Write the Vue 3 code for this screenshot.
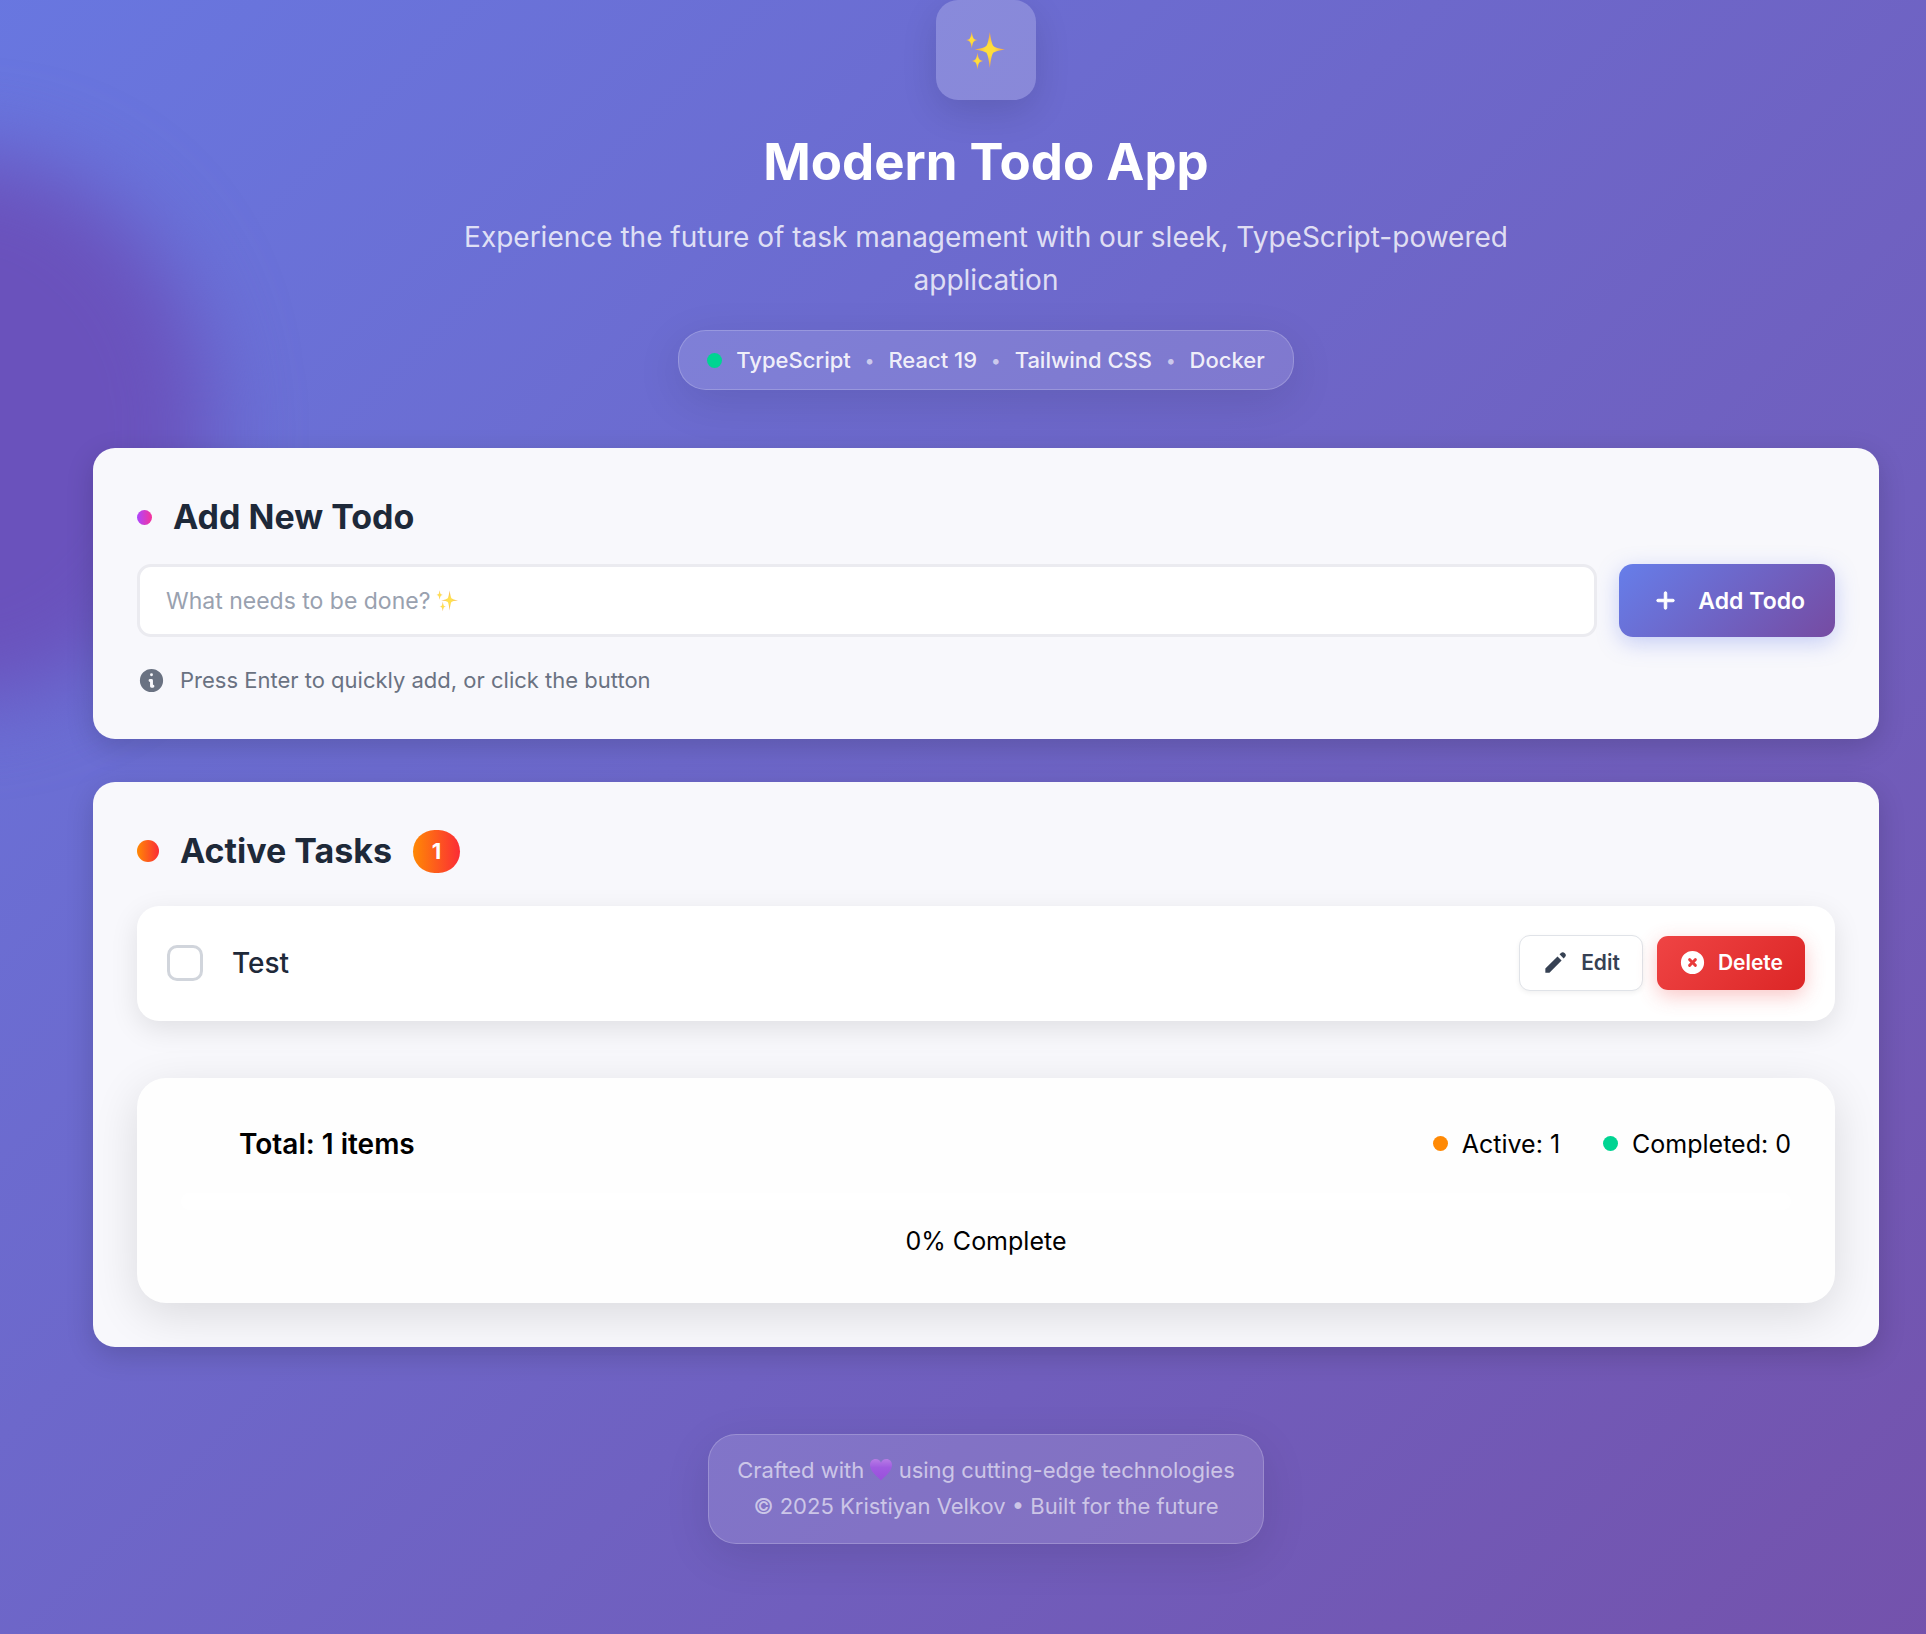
<script setup>
import { ref, computed } from 'vue'

const technologies = ['TypeScript', 'React 19', 'Tailwind CSS', 'Docker']
const draft = ref('')
const todos = ref([{ id: 1, text: 'Test', done: false }])

const active = computed(() => todos.value.filter((t) => !t.done))
const completed = computed(() => todos.value.length - active.value.length)
const percent = computed(() =>
  todos.value.length ? Math.round((completed.value / todos.value.length) * 100) : 0
)

function addTodo() {
  const text = draft.value.trim()
  if (!text) return
  todos.value.push({ id: Date.now(), text, done: false })
  draft.value = ''
}

function removeTodo(id) {
  todos.value = todos.value.filter((t) => t.id !== id)
}
</script>

<template>
  <div class="page">
    <div class="glow" aria-hidden="true"></div>

    <header class="hero">
      <div class="logo">
        <svg class="logo-sparkle" viewBox="0 0 40 40" aria-hidden="true">
          <defs>
            <radialGradient id="spark">
              <stop offset="0.3" stop-color="#ffdd3c" />
              <stop offset="1" stop-color="#f2a04a" />
            </radialGradient>
          </defs>
          <path fill="url(#spark)" d="M24 1Q25.500 12 27.500 15.500Q30 18 40 19.500Q30 21 27.500 23Q25.500 26 24 39Q22.500 26 20.500 23Q18 21 8 19.500Q18 18 20.500 15.500Q22.500 12 24 1Z" />
          <path fill="url(#spark)" d="M5 0.500Q5.700 6 7 7.800Q8 9 11 9.500Q8 10 7 11.200Q5.700 13 5 18.500Q4.300 13 3 11.200Q2 10 -1 9.500Q2 9 3 7.800Q4.300 6 5 0.500Z" />
          <path fill="url(#spark)" d="M11 22.500Q11.700 28 13 29.800Q14 31 17 31.500Q14 32 13 33.200Q11.700 35 11 40.500Q10.300 35 9 33.200Q8 32 5 31.500Q8 31 9 29.800Q10.300 28 11 22.500Z" />
        </svg>
      </div>
      <h1>Modern Todo App</h1>
      <p class="tagline">
        Experience the future of task management with our sleek, TypeScript-powered application
      </p>
      <div class="tech glass">
        <span class="dot green"></span>
        <template v-for="(name, i) in technologies" :key="name">
          <span v-if="i" class="sep">•</span>
          <span>{{ name }}</span>
        </template>
      </div>
    </header>

    <main>
      <section class="card">
        <div class="card-title">
          <span class="dot violet"></span>
          <h2>Add New Todo</h2>
        </div>
        <form class="add-row" @submit.prevent="addTodo">
          <div class="field">
            <input v-model="draft" type="text" aria-label="New todo" placeholder="What needs to be done?" />
            <svg v-if="!draft" class="field-sparkle" viewBox="0 0 40 40" aria-hidden="true">
              <path fill="url(#spark)" d="M24 1Q25.500 12 27.500 15.500Q30 18 40 19.500Q30 21 27.500 23Q25.500 26 24 39Q22.500 26 20.500 23Q18 21 8 19.500Q18 18 20.500 15.500Q22.500 12 24 1Z" />
              <path fill="url(#spark)" d="M5 0.500Q5.700 6 7 7.800Q8 9 11 9.500Q8 10 7 11.200Q5.700 13 5 18.500Q4.300 13 3 11.200Q2 10 -1 9.500Q2 9 3 7.800Q4.300 6 5 0.500Z" />
              <path fill="url(#spark)" d="M11 22.500Q11.700 28 13 29.800Q14 31 17 31.500Q14 32 13 33.200Q11.700 35 11 40.500Q10.300 35 9 33.200Q8 32 5 31.500Q8 31 9 29.800Q10.300 28 11 22.500Z" />
            </svg>
          </div>
          <button class="btn-add" type="submit">
            <svg viewBox="0 0 20 20" aria-hidden="true">
              <path d="M10 3a1 1 0 011 1v5h5a1 1 0 110 2h-5v5a1 1 0 11-2 0v-5H4a1 1 0 110-2h5V4a1 1 0 011-1z" />
            </svg>
            Add Todo
          </button>
        </form>
        <p class="hint">
          <svg viewBox="0 0 20 20" aria-hidden="true">
            <path
              fill-rule="evenodd"
              d="M18 10a8 8 0 11-16 0 8 8 0 0116 0zm-7-4a1 1 0 11-2 0 1 1 0 012 0zM9 9a1 1 0 000 2v3a1 1 0 001 1h1a1 1 0 100-2v-3a1 1 0 00-1-1H9z"
            />
          </svg>
          Press Enter to quickly add, or click the button
        </p>
      </section>

      <section class="card">
        <div class="card-title">
          <span class="dot orange big"></span>
          <h2>Active Tasks</h2>
          <span class="count">{{ active.length }}</span>
        </div>

        <ul class="tasks">
          <li v-for="todo in active" :key="todo.id" class="task">
            <label class="task-label">
              <input v-model="todo.done" type="checkbox" />
              <span>{{ todo.text }}</span>
            </label>
            <button class="btn btn-edit" type="button">
              <svg viewBox="0 0 20 20" aria-hidden="true">
                <path
                  d="M13.586 3.586a2 2 0 112.828 2.828l-.793.793-2.828-2.828.793-.793zM11.379 5.793L3 14.172V17h2.828l8.38-8.379-2.83-2.828z"
                />
              </svg>
              Edit
            </button>
            <button class="btn btn-delete" type="button" @click="removeTodo(todo.id)">
              <svg viewBox="0 0 20 20" aria-hidden="true">
                <path
                  fill-rule="evenodd"
                  d="M10 18a8 8 0 100-16 8 8 0 000 16zM8.707 7.293a1 1 0 00-1.414 1.414L8.586 10l-1.293 1.293a1 1 0 101.414 1.414L10 11.414l1.293 1.293a1 1 0 001.414-1.414L11.414 10l1.293-1.293a1 1 0 00-1.414-1.414L10 8.586 8.707 7.293z"
                />
              </svg>
              Delete
            </button>
          </li>
        </ul>

        <div class="stats">
          <div class="stats-row">
            <strong class="total">Total: {{ todos.length }} items</strong>
            <span class="stat"><span class="dot amber"></span>Active: {{ active.length }}</span>
            <span class="stat"><span class="dot green"></span>Completed: {{ completed }}</span>
          </div>
          <div class="bar"><div class="bar-fill" :style="{ width: percent + '%' }"></div></div>
          <p class="percent">{{ percent }}% Complete</p>
        </div>
      </section>
    </main>

    <footer class="credits glass">
      <p>
        Crafted with
        <svg class="heart" viewBox="0 0 20 20" role="img" aria-label="purple heart">
          <defs>
            <linearGradient id="heart" x2="0" y2="1">
              <stop offset="0" stop-color="#b87be6" />
              <stop offset="0.4" stop-color="#a05be0" />
              <stop offset="1" stop-color="#9a4fdc" />
            </linearGradient>
          </defs>
          <path
            fill="url(#heart)"
            d="M10 19.500C8 17 0 12 0 5.500C0 2 2.500 0 5 0C7.500 0 9.300 1.500 10 3.500C10.700 1.500 12.500 0 15 0C17.500 0 20 2 20 5.500C20 12 12 17 10 19.500Z"
          />
        </svg>
        using cutting-edge technologies
      </p>
      <p>© 2025 Kristiyan Velkov • Built for the future</p>
    </footer>
  </div>
</template>

<style>
body {
  margin: 0;
}
</style>

<style scoped>
* {
  box-sizing: border-box;
}

h1,
h2,
p,
ul {
  margin: 0;
  padding: 0;
}

.page {
  position: relative;
  overflow: hidden;
  min-height: 100vh;
  padding: 0 47px 90px 93px;
  background: linear-gradient(135deg, #667eea -20%, #764ba2 120%);
  font-family: Inter, 'Liberation Sans', sans-serif;
  display: flex;
  flex-direction: column;
}

.glow {
  position: absolute;
  left: -290px;
  top: 154px;
  width: 500px;
  height: 550px;
  border-radius: 50%;
  background: #6a52bc;
  filter: blur(42px);
}

.hero {
  position: relative;
  display: flex;
  flex-direction: column;
  align-items: center;
  color: #fff;
}

.logo {
  width: 100px;
  height: 100px;
  border-radius: 22px;
  background: rgba(255, 255, 255, 0.2);
  box-shadow: 0 12px 36px rgba(0, 0, 0, 0.12);
  display: grid;
  place-items: center;
}

.logo-sparkle {
  width: 38px;
  height: 38px;
  overflow: visible;
}

h1 {
  margin-top: 29px;
  font-size: 51px;
  line-height: 65px;
  font-weight: 700;
}

.tagline {
  max-width: 1104px;
  margin-top: 22px;
  font-size: 28px;
  line-height: 43px;
  text-align: center;
  color: rgba(255, 255, 255, 0.8);
}

.glass {
  border: 1px solid rgba(255, 255, 255, 0.2);
  border-radius: 28px;
  background: rgba(255, 255, 255, 0.13);
  box-shadow: 0 12px 46px rgba(0, 0, 0, 0.1);
}

.tech {
  height: 60px;
  margin-top: 28px;
  padding: 0 28px;
  display: flex;
  align-items: center;
  gap: 14px;
  font-size: 22px;
  line-height: 29px;
  font-weight: 500;
  color: rgba(255, 255, 255, 0.9);
}

.sep {
  font-size: 18px;
  color: rgba(255, 255, 255, 0.6);
}

.dot {
  flex: none;
  width: 15px;
  height: 15px;
  border-radius: 50%;
}

.big {
  width: 22px;
  height: 22px;
}

.green {
  background: #00d492;
}

.amber {
  background: #ff8904;
}

.violet {
  background: linear-gradient(90deg, #ad46ff, #f6339a);
}

.orange,
.count {
  background: linear-gradient(90deg, #ff8904, #fb2c36);
}

main {
  position: relative;
  margin-top: 58px;
  display: flex;
  flex-direction: column;
  gap: 43px;
}

.card {
  padding: 44px;
  border-radius: 22px;
  background: #f8f8fc;
  box-shadow: 0 8px 28px rgba(0, 0, 0, 0.16);
}

.card-title {
  height: 50px;
  display: flex;
  align-items: center;
  gap: 21px;
}

h2 {
  font-size: 34px;
  line-height: 50px;
  font-weight: 700;
  color: #1e2939;
}

.count {
  width: 47px;
  height: 43px;
  border-radius: 22px;
  font-size: 22px;
  line-height: 43px;
  font-weight: 700;
  text-align: center;
  color: #fff;
}

.add-row {
  margin-top: 22px;
  display: flex;
  gap: 22px;
}

.field {
  position: relative;
  flex: 1;
}

.field input {
  width: 100%;
  height: 73px;
  padding: 0 26px;
  border: 3px solid #ebebf0;
  border-radius: 14px;
  background: #fff;
  font: 400 23px 'Inter', sans-serif;
  color: #1e2939;
}

.field input::placeholder {
  color: #99a1af;
  opacity: 1;
}

.field-sparkle {
  position: absolute;
  left: 300px;
  top: 26px;
  width: 21px;
  height: 21px;
  overflow: visible;
  opacity: 0.9;
}

button {
  border: 0;
  font-family: inherit;
  font-weight: 600;
  cursor: pointer;
  display: flex;
  align-items: center;
}

button svg,
.hint svg {
  flex: none;
  width: 29px;
  height: 29px;
  fill: currentColor;
}

.btn-add {
  height: 73px;
  padding: 0 30px 0 34px;
  gap: 20px;
  border-radius: 14px;
  background: linear-gradient(135deg, #667eea, #764ba2);
  box-shadow: 0 6px 22px rgba(102, 126, 234, 0.35);
  font-size: 23px;
  color: #fff;
}

.btn-add svg {
  width: 25px;
  height: 25px;
  stroke: currentColor;
  stroke-width: 0.8px;
}

.hint {
  margin-top: 29px;
  display: flex;
  align-items: center;
  gap: 14px;
  font-size: 22px;
  line-height: 29px;
  color: #6a7282;
}

.tasks {
  margin-top: 30px;
  list-style: none;
}

.task {
  height: 115px;
  padding: 0 30px 2px;
  border-radius: 22px;
  background: #fff;
  box-shadow: 0 8px 28px rgba(0, 0, 0, 0.1);
  display: flex;
  align-items: center;
  gap: 14px;
}

.task-label {
  flex: 1;
  display: flex;
  align-items: center;
  gap: 29px;
  font-size: 28px;
  font-weight: 500;
  color: #1e2939;
}

.task-label input {
  appearance: none;
  width: 36px;
  height: 36px;
  margin: 0;
  border: 3px solid #d1d5dc;
  border-radius: 10px;
  background: #fff;
}

.btn {
  height: 54px;
  padding: 0 22px 0 21px;
  gap: 11px;
  border-radius: 11px;
  font-size: 21px;
}

.btn-edit {
  height: 56px;
  border: 1px solid #e0e3e8;
  background: #fff;
  box-shadow: 0 2px 5px rgba(0, 0, 0, 0.06);
  color: #364153;
}

.btn-delete {
  background: linear-gradient(135deg, #ef4444, #dc2626);
  box-shadow: 0 6px 20px rgba(239, 68, 68, 0.3);
  color: #fff;
}

.stats {
  margin-top: 57px;
  padding: 44px;
  border-radius: 29px;
  background: #fefefe;
  box-shadow: 0 12px 46px rgba(0, 0, 0, 0.12);
  color: #000;
}

.stats-row {
  height: 43px;
  padding-left: 58px;
  display: flex;
  align-items: center;
  gap: 43px;
  font-size: 25px;
}

.total {
  flex: 1;
  font-size: 28px;
  font-weight: 600;
}

.stat {
  display: flex;
  align-items: center;
  gap: 14px;
}

.bar {
  height: 17px;
  margin-top: 28px;
  border-radius: 9px;
  background: #fff;
}

.bar-fill {
  height: 100%;
  border-radius: 9px;
  background: #00d492;
}

.percent {
  margin-top: 14px;
  font-size: 25px;
  line-height: 35px;
  text-align: center;
}

.credits {
  position: relative;
  align-self: center;
  margin-top: 87px;
  padding: 17px 28px 19px;
  font-size: 22px;
  line-height: 36px;
  text-align: center;
  color: rgba(255, 255, 255, 0.6);
}

.heart {
  width: 22px;
  height: 22px;
  vertical-align: -3px;
}
</style>
